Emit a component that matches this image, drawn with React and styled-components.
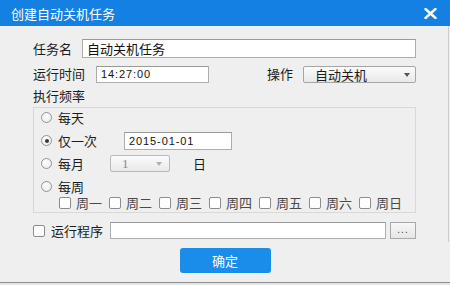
import React from 'react'
import styled, { createGlobalStyle } from 'styled-components'

const GlobalStyle = createGlobalStyle`
  html, body {
    margin: 0;
    padding: 0;
    background: #efefef;
  }
  body {
    font-family: "Noto Sans CJK SC", "Noto Sans", sans-serif;
    color: #1c1c1c;
  }
  * {
    box-sizing: border-box;
  }
`

const Window = styled.div`
  width: 450px;
  height: 285px;
  display: flex;
  flex-direction: column;
  background: #efefef;
  overflow: hidden;
`
const TitleBar = styled.div`
  flex: none;
  height: 26px;
  display: flex;
  align-items: center;
  justify-content: space-between;
  padding: 0 13px 0 11px;
  background: #1380e2;
  color: #fff;
  font-size: 13px;
`
const Form = styled.div`
  width: 449px;
  padding: 13px 32px 3px 33px;
  border-right: 1px solid #cdcdcd;
`
const Row = styled.div`
  display: flex;
  align-items: center;
  height: ${p => p.h || 19}px;
  margin-top: ${p => p.mt || 0}px;
`
const Label = styled.span`
  font-size: 13px;
  line-height: 16px;
  white-space: nowrap;
  margin-right: ${p => p.mr || 0}px;
  margin-left: ${p => p.ml || 0}px;
  color: ${p => p.light ? '#4a4a4a' : '#1c1c1c'};
`
const TextBox = styled.input`
  height: ${p => p.h || 17}px;
  width: ${p => p.w ? p.w + 'px' : 'auto'};
  flex: ${p => p.w ? 'none' : 1};
  min-width: 0;
  margin: 0 0 0 ${p => p.ml || 0}px;
  padding: 0 4px;
  border: 1px solid #adadad;
  border-top-color: #9a9a9a;
  background: #fff;
  outline: none;
  font-family: ${p => p.mono ? '"Liberation Sans", Arial, sans-serif' : '"Noto Sans CJK SC", sans-serif'};
  font-size: ${p => p.mono ? 11 : 13}px;
  letter-spacing: ${p => p.mono ? '0.9px' : '0'};
  color: #111;
`
const Select = styled.div`
  position: relative;
  display: flex;
  align-items: center;
  width: ${p => p.w}px;
  height: 17px;
  margin-left: ${p => p.ml || 0}px;
  padding-left: ${p => p.pl || 6}px;
  border: 1px solid ${p => p.disabled ? '#b9b9b9' : '#a6a6a6'};
  border-radius: 2px;
  background: linear-gradient(#fbfbfb, #e9e9e9);
  font-size: 13px;
  color: ${p => p.disabled ? '#8a8a8a' : '#1c1c1c'};
  font-family: ${p => p.disabled ? '"Liberation Serif", serif' : '"Noto Sans CJK SC", sans-serif'};
`
const Arrow = styled.span`
  position: absolute;
  right: ${p => p.r || 6}px;
  top: 6px;
  width: 0;
  height: 0;
  border-left: 3.5px solid transparent;
  border-right: 3.5px solid transparent;
  border-top: 4px solid ${p => p.disabled ? '#b0b0b0' : '#555'};
`
const Spacer = styled.div`
  flex: 1;
`
const Group = styled.div`
  margin-top: 3px;
  height: 106px;
  border: 1px solid #d8d8d8;
  padding-left: 7px;
`
const RadioRow = styled.div`
  display: flex;
  align-items: center;
  height: 19px;
  & + & {
    margin-top: 4px;
  }
`
const Radio = styled.span`
  position: relative;
  flex: none;
  width: 11px;
  height: 11px;
  border-radius: 50%;
  border: 1px solid #939393;
  background: radial-gradient(circle at 40% 35%, #fff, #e8e8e8);
  margin-right: 6px;
  &::after {
    content: '';
    display: ${p => p.checked ? 'block' : 'none'};
    position: absolute;
    left: 2.5px;
    top: 2.5px;
    width: 4px;
    height: 4px;
    border-radius: 50%;
    background: #3a3a3a;
  }
`
const WeekRow = styled.div`
  display: flex;
  align-items: center;
  height: 14px;
  padding-left: 18px;
  gap: 7px;
`
const WeekItem = styled.label`
  display: flex;
  align-items: center;
`
const Check = styled.span`
  flex: none;
  width: 12px;
  height: 12px;
  border: 1px solid #8c8c8c;
  border-radius: 2px;
  background: #fff;
  margin-right: ${p => p.mr || 5}px;
`
const DotsButton = styled.div`
  flex: none;
  width: 26px;
  height: 17px;
  margin-left: 4px;
  border: 1px solid #a9a9a9;
  background: linear-gradient(#f7f7f7, #e6e6e6);
  display: flex;
  align-items: center;
  justify-content: center;
  font-family: "Liberation Sans", Arial, sans-serif;
  font-size: 10px;
  letter-spacing: 1px;
  color: #444;
  padding-bottom: 3px;
`
const Footer = styled.div`
  display: flex;
  justify-content: center;
  padding-top: 6px;
`
const OkButton = styled.div`
  width: 91px;
  height: 25px;
  border-radius: 3px;
  background: #1a8ce9;
  color: #fff;
  font-size: 13px;
  display: flex;
  align-items: center;
  justify-content: center;
`
const BottomEdge = styled.div`
  margin-top: auto;
  height: 3px;
  border-top: 1px solid #8e8e8e;
  background: #e4e4e4;
`

const days = ['周一', '周二', '周三', '周四', '周五', '周六', '周日']

export default function App () {
  return (
    <Window>
      <GlobalStyle />
      <TitleBar>
        <span>创建自动关机任务</span>
        <svg width='13' height='11' viewBox='0 0 13 11'>
          <path d='M1.5 1 L11.5 10 M11.5 1 L1.5 10' stroke='#fff' strokeWidth='2.4' strokeLinecap='round' />
        </svg>
      </TitleBar>
      <Form>
        <Row>
          <Label mr={10}>任务名</Label>
          <TextBox h={19} defaultValue='自动关机任务' readOnly />
        </Row>
        <Row mt={7} h={18}>
          <Label mr={11}>运行时间</Label>
          <TextBox w={113} mono defaultValue='14:27:00' readOnly />
          <Spacer />
          <Label mr={10}>操作</Label>
          <Select w={113} pl={11}>
            自动关机
            <Arrow r={5} />
          </Select>
        </Row>
        <Row mt={5} h={16}>
          <Label>执行频率</Label>
        </Row>
        <Group>
          <RadioRow>
            <Radio />
            <Label>每天</Label>
          </RadioRow>
          <RadioRow>
            <Radio checked />
            <Label>仅一次</Label>
            <TextBox w={108} h={18} ml={27} mono defaultValue='2015-01-01' readOnly />
          </RadioRow>
          <RadioRow>
            <Radio />
            <Label>每月</Label>
            <Select w={60} ml={26} pl={11} disabled>
              1
              <Arrow r={7} disabled />
            </Select>
            <Label ml={23}>日</Label>
          </RadioRow>
          <RadioRow>
            <Radio />
            <Label>每周</Label>
          </RadioRow>
          <WeekRow>
            {days.map(d => (
              <WeekItem key={d}>
                <Check />
                <Label light>{d}</Label>
              </WeekItem>
            ))}
          </WeekRow>
        </Group>
        <Row mt={9} h={17}>
          <Check mr={6} />
          <Label mr={7}>运行程序</Label>
          <TextBox readOnly />
          <DotsButton>...</DotsButton>
        </Row>
      </Form>
      <Footer>
        <OkButton>确定</OkButton>
      </Footer>
      <BottomEdge />
    </Window>
  )
}
